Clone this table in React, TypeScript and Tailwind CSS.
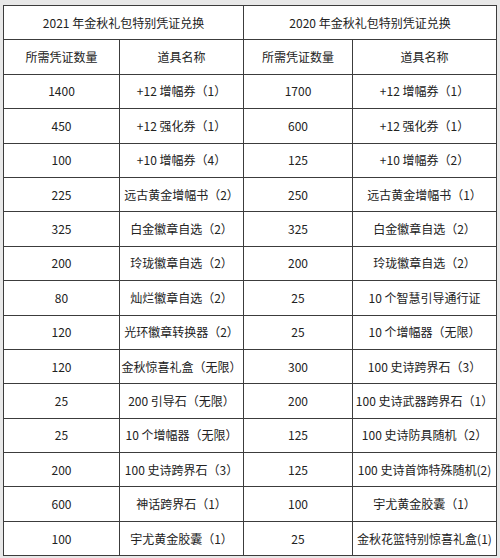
const left: [string, string][] = [
  ["1400", "+12 增幅券（1）"],
  ["450", "+12 强化券（1）"],
  ["100", "+10 增幅券（4）"],
  ["225", "远古黄金增幅书（2）"],
  ["325", "白金徽章自选（2）"],
  ["200", "玲珑徽章自选（2）"],
  ["80", "灿烂徽章自选（2）"],
  ["120", "光环徽章转换器（2）"],
  ["120", "金秋惊喜礼盒（无限）"],
  ["25", "200 引导石（无限）"],
  ["25", "10 个增幅器（无限）"],
  ["200", "100 史诗跨界石（3）"],
  ["600", "神话跨界石（1）"],
  ["100", "宇尤黄金胶囊（1）"],
];

const right: [string, string][] = [
  ["1700", "+12 增幅券（1）"],
  ["600", "+12 强化券（1）"],
  ["125", "+10 增幅券（2）"],
  ["250", "远古黄金增幅书（1）"],
  ["325", "白金徽章自选（2）"],
  ["200", "玲珑徽章自选（2）"],
  ["25", "10 个智慧引导通行证"],
  ["25", "10 个增幅器（无限）"],
  ["300", "100 史诗跨界石（3）"],
  ["200", "100 史诗武器跨界石（1）"],
  ["125", "100 史诗防具随机（2）"],
  ["125", "100 史诗首饰特殊随机(2)"],
  ["100", "宇尤黄金胶囊（1）"],
  ["25", "金秋花篮特别惊喜礼盒(1)"],
];

function Cell({ children, span = false }: { children: React.ReactNode; span?: boolean }) {
  return (
    <div
      className={
        "flex items-center justify-center whitespace-nowrap border-r border-b border-[#3c3c3c] bg-white" +
        (span ? " col-span-2" : "")
      }
    >
      {children}
    </div>
  );
}

export default function App() {
  return (
    <div className="h-[558px] w-[500px] bg-[#e8e8e8] pt-[5px] pl-[3px]">
      <div
        className="grid w-[494px] grid-cols-[116px_124px_109px_144px] auto-rows-[34.4px] border-t border-l border-[#3c3c3c] text-[12px] text-[#222]"
        style={{ fontFamily: '"Noto Sans CJK SC", "Noto Sans", sans-serif' }}
      >
        <Cell span>2021 年金秋礼包特别凭证兑换</Cell>
        <Cell span>2020 年金秋礼包特别凭证兑换</Cell>
        <Cell>所需凭证数量</Cell>
        <Cell>道具名称</Cell>
        <Cell>所需凭证数量</Cell>
        <Cell>道具名称</Cell>
        {left.map((row, i) => (
          <div key={i} className="contents">
            <Cell>{row[0]}</Cell>
            <Cell>{row[1]}</Cell>
            <Cell>{right[i][0]}</Cell>
            <Cell>{right[i][1]}</Cell>
          </div>
        ))}
      </div>
    </div>
  );
}
